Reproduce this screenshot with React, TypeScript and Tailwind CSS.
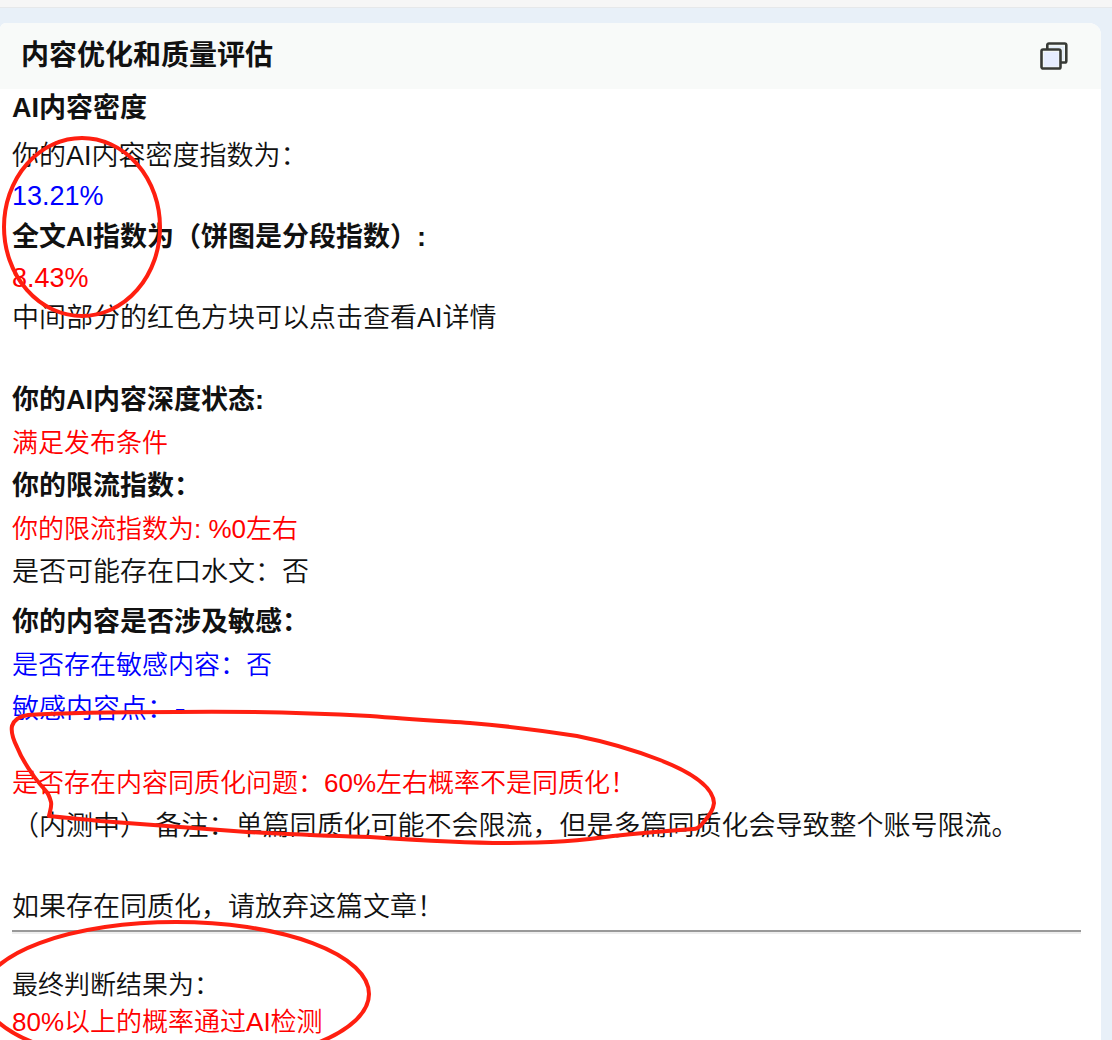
import React from "react";

type Tone = "ink" | "red" | "blue";

const tones: Record<Tone, string> = {
  ink: "text-[#111111]",
  red: "text-[#ff0000]",
  blue: "text-[#0000ff]",
};

function Line({
  tone = "ink",
  className,
  children,
}: {
  tone?: Tone;
  className: string;
  children: React.ReactNode;
}) {
  return <p className={`font-[350] ${tones[tone]} ${className}`}>{children}</p>;
}

function Heading({ className, children }: { className: string; children: React.ReactNode }) {
  return <h3 className={`text-[27px] font-bold text-[#111111] ${className}`}>{children}</h3>;
}

function CopyIcon() {
  return (
    <svg width="28" height="28" viewBox="0 0 28 28" aria-hidden="true">
      <g fill="#f2f7f6" stroke="#373a36" strokeWidth="2.6">
        <rect x="7.3" y="1.5" width="19" height="19" rx="1.6" />
        <rect x="1.5" y="7.5" width="19" height="19" rx="1.6" />
      </g>
      <rect x="4" y="10" width="14.5" height="14.5" fill="#e6edff" />
      <path d="M10 4.5 H24 V18 H22.4 V6 H10 Z" fill="#e0eafa" />
    </svg>
  );
}

function Annotations() {
  return (
    <svg
      className="pointer-events-none absolute top-0 left-0"
      width="740"
      height="1100"
      viewBox="0 0 740 1100"
      fill="none"
      stroke="#ff1f10"
      strokeWidth="4"
      strokeLinejoin="round"
      aria-hidden="true"
    >
      <ellipse cx="82" cy="227" rx="78" ry="89" />
      <path d="M49 816 C50 811 52 806 51 802 C50 798 48 793 45 790 C41 785 37 781 33 775 C28 768 21 757 17 747 C13 739 11 731 12 726 C14 720 20 716 28 715 C75 712 125 712 177 712 C245 711 310 713 370 716 C405 719 440 721 470 723 C508 726 545 731 577 736 C607 742 634 750 660 760 C688 771 713 785 714 803 C713 813 706 819 702 824 C699 828 697 829 693 829 C665 831 640 833 613 836 C580 841 550 843 505 843 C460 843 415 840 370 837 C325 836 290 834 247 832 C195 828 145 824 100 821 C83 819 66 818 49 816 Z" />
      <ellipse cx="176" cy="994" rx="193" ry="72" />
    </svg>
  );
}

export default function App() {
  return (
    <div className="relative min-h-screen overflow-hidden bg-[#e8f0f8] font-['Liberation_Sans','Noto_Sans_CJK_SC',sans-serif]">
      <div className="h-2 border-b border-[#e6e8ea] bg-[#f6f6f6]" />
      <main className="mt-[15px] mr-[11px] min-h-[1017px] overflow-hidden rounded-tr-xl rounded-tl-md bg-white">
        <header className="flex h-[66px] items-center justify-between bg-[#f8faf9] pr-[33px] pl-[21px]">
          <h2 className="text-[28px] leading-10 font-bold text-[#111111]">内容优化和质量评估</h2>
          <button type="button" aria-label="复制" className="cursor-pointer">
            <CopyIcon />
          </button>
        </header>
        <article className="pr-5 pl-3">
          <Heading className="leading-[38px]">AI内容密度</Heading>
          <Line className="mt-2 text-[27px] leading-[43px]">你的AI内容密度指数为：</Line>
          <Line tone="blue" className="text-[27px] leading-[37px]">13.21%</Line>
          <Heading className="leading-[45px]">全文AI指数为（饼图是分段指数）:</Heading>
          <Line tone="red" className="text-[27px] leading-[37px]">8.43%</Line>
          <Line className="text-[27px] leading-[43px]">中间部分的红色方块可以点击查看AI详情</Line>

          <Heading className="mt-[39px] leading-[43px]">你的AI内容深度状态:</Heading>
          <Line tone="red" className="text-[26px] leading-[43px]">满足发布条件</Line>
          <Heading className="leading-[43px]">你的限流指数：</Heading>
          <Line tone="red" className="text-[26px] leading-[43px]">你的限流指数为: %0左右</Line>
          <Line className="text-[27px] leading-[43px]">是否可能存在口水文：否</Line>

          <Heading className="mt-[7px] leading-[43px]">你的内容是否涉及敏感：</Heading>
          <Line tone="blue" className="text-[26px] leading-[43px]">是否存在敏感内容：否</Line>
          <Line tone="blue" className="text-[27px] leading-[43px]">
            敏感内容点：<span className="font-['Inter']">-</span>
          </Line>

          <Line tone="red" className="mt-[31px] text-[26px] leading-[43px]">
            是否存在内容同质化问题：60%左右概率不是同质化！
          </Line>
          <Line className="text-[27px] leading-[43px]">
            （内测中） 备注：单篇同质化可能不会限流，但是多篇同质化会导致整个账号限流。
          </Line>
          <Line className="mt-[38px] text-[27px] leading-[43px]">如果存在同质化，请放弃这篇文章！</Line>

          <hr className="mt-px h-1 border-t-2 border-b-2 border-t-[#999999] border-b-[#eeeeee]" />
          <Line className="mt-[33px] text-[26px] leading-[37px]">最终判断结果为：</Line>
          <Line tone="red" className="text-[26px] leading-[37px]">80%以上的概率通过AI检测</Line>
        </article>
      </main>
      <Annotations />
    </div>
  );
}
